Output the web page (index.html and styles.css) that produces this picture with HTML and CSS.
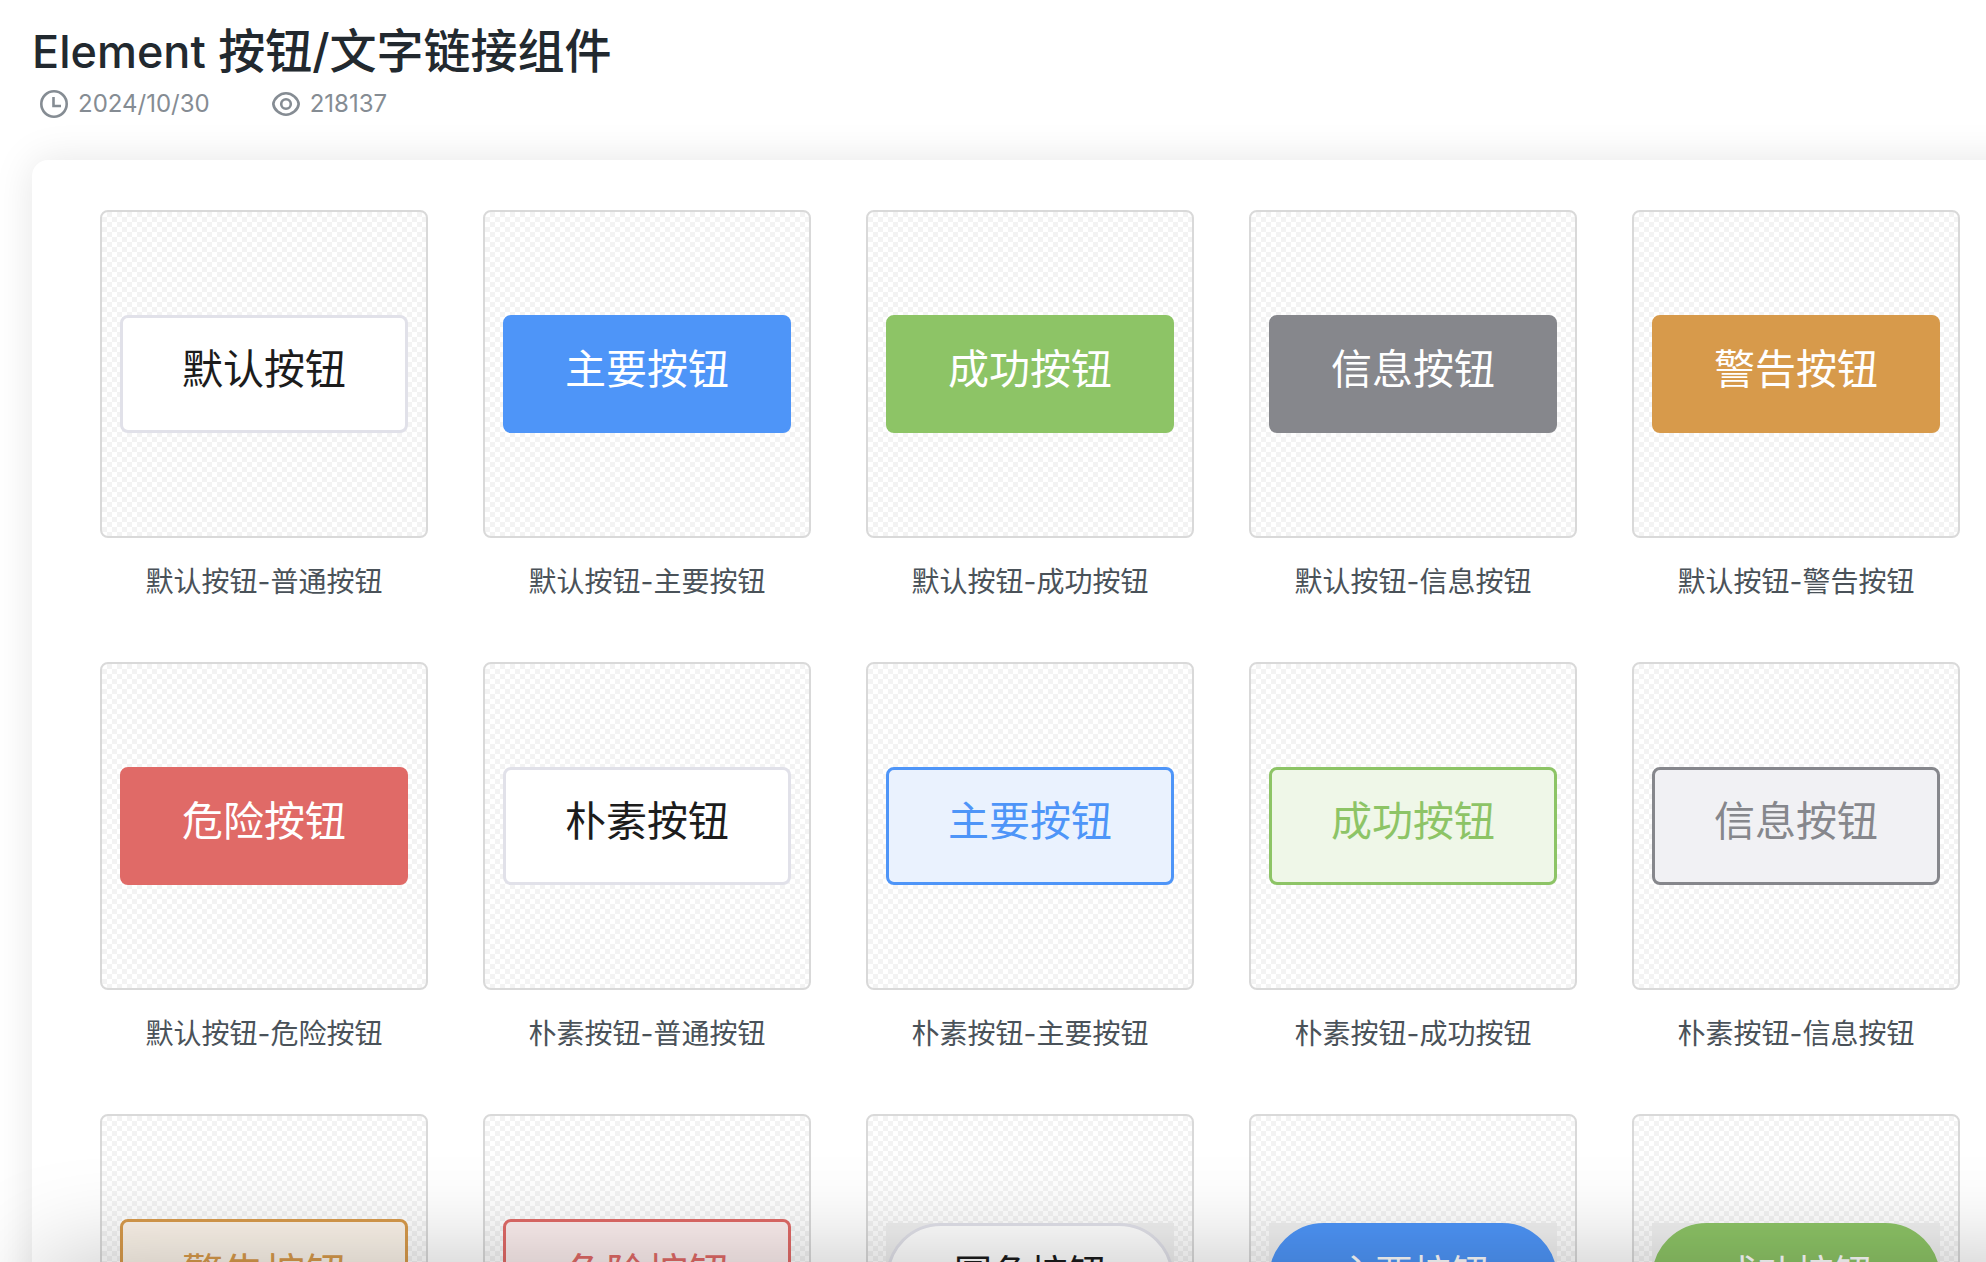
FILE: index.html
```html
<!DOCTYPE html>
<html lang="zh-CN">
<head>
<meta charset="utf-8">
<meta name="viewport" content="width=device-width, initial-scale=1">
<title>Element 按钮/文字链接组件</title>
<link rel="stylesheet" href="styles.css">
</head>
<body>
<header class="header">
  <h1 class="title"><span class="latin">Element</span> 按钮/文字链接组件</h1>
  <div class="meta">
    <span class="meta-item">
      <svg class="icon" viewBox="0 0 28 28" aria-hidden="true"><circle cx="14" cy="14" r="12.7"/><path d="M13.500 7v9H21"/></svg>
      <time datetime="2024-10-30">2024/10/30</time>
    </span>
    <span class="meta-item">
      <svg class="icon" viewBox="0 0 28 28" aria-hidden="true"><path d="M1.300 14C2 8 8 3.300 14 3.300S26 8 26.700 14C26 20 20 24.700 14 24.700S2 20 1.300 14Z"/><circle cx="14" cy="14" r="4.800"/></svg>
      <span>218137</span>
    </span>
  </div>
</header>
<main class="panel">
  <ul class="grid">
    <li class="item"><div class="preview"><button class="btn" type="button">默认按钮</button></div><p class="caption">默认按钮-普通按钮</p></li>
    <li class="item"><div class="preview"><button class="btn primary" type="button">主要按钮</button></div><p class="caption">默认按钮-主要按钮</p></li>
    <li class="item"><div class="preview"><button class="btn success" type="button">成功按钮</button></div><p class="caption">默认按钮-成功按钮</p></li>
    <li class="item"><div class="preview"><button class="btn info" type="button">信息按钮</button></div><p class="caption">默认按钮-信息按钮</p></li>
    <li class="item"><div class="preview"><button class="btn warning" type="button">警告按钮</button></div><p class="caption">默认按钮-警告按钮</p></li>
    <li class="item"><div class="preview"><button class="btn danger" type="button">危险按钮</button></div><p class="caption">默认按钮-危险按钮</p></li>
    <li class="item"><div class="preview"><button class="btn" type="button">朴素按钮</button></div><p class="caption">朴素按钮-普通按钮</p></li>
    <li class="item"><div class="preview"><button class="btn primary plain" type="button">主要按钮</button></div><p class="caption">朴素按钮-主要按钮</p></li>
    <li class="item"><div class="preview"><button class="btn success plain" type="button">成功按钮</button></div><p class="caption">朴素按钮-成功按钮</p></li>
    <li class="item"><div class="preview"><button class="btn info plain" type="button">信息按钮</button></div><p class="caption">朴素按钮-信息按钮</p></li>
    <li class="item"><div class="preview"><button class="btn warning plain" type="button">警告按钮</button></div></li>
    <li class="item"><div class="preview"><button class="btn danger plain" type="button">危险按钮</button></div></li>
    <li class="item"><div class="preview"><div class="backing"><button class="btn round" type="button">圆角按钮</button></div></div></li>
    <li class="item"><div class="preview"><div class="backing"><button class="btn round primary" type="button">主要按钮</button></div></div></li>
    <li class="item"><div class="preview"><div class="backing"><button class="btn round success" type="button">成功按钮</button></div></div></li>
  </ul>
</main>
<div class="bottom-shade"></div>
</body>
</html>
```
FILE: styles.css
```css
* {
  box-sizing: border-box;
}

html {
  overflow-x: hidden;
  scrollbar-width: none;
}

body {
  margin: 0;
  background: #fff;
  color: #22292f;
  font-family: Inter, "Noto Sans CJK SC", sans-serif;
}

.header {
  padding: 20px 32px 0;
}

.title {
  margin: 0;
  font-size: 47px;
  font-weight: 500;
  line-height: 62px;
}

.latin {
  font-size: 45px;
  line-height: 1;
}

.meta {
  display: flex;
  gap: 62px;
  padding: 6px 8px 0;
  color: #858c93;
  font-size: 24px;
  line-height: 32px;
}

.meta-item {
  display: flex;
  align-items: center;
  gap: 10px;
}

.icon {
  width: 28px;
  height: 28px;
  fill: none;
  stroke: currentColor;
  stroke-width: 2.600;
}

/* The panel bleeds off the right side of the window */
.panel {
  margin: 40px -60px 0 32px;
  padding: 50px 86px 50px 68px;
  border-radius: 16px;
  background: #fff;
  box-shadow: 0 0 40px rgba(0, 0, 0, 0.1);
}

.grid {
  display: grid;
  grid-template-columns: repeat(5, 1fr);
  gap: 60px 55px;
  margin: 0;
  padding: 0;
  list-style: none;
}

.preview {
  display: flex;
  align-items: center;
  aspect-ratio: 1;
  padding: 0 18px;
  border: 2px solid #d9d9d9;
  border-radius: 8px;
  background: repeating-conic-gradient(#f3f3f3 0 25%, #fff 0 50%) 0 0 / 10px 10px;
}

.caption {
  margin: 24px 0 0;
  color: #4a5259;
  font-size: 28px;
  line-height: 40px;
  text-align: center;
  white-space: nowrap;
}

.btn {
  --tone: #e1e1e9;
  width: 100%;
  height: 118px;
  padding: 0 0 10px;
  border: 3px solid var(--tone);
  border-radius: 8px;
  background: #fff;
  color: #1c1c1c;
  font-family: inherit;
  font-size: 41px;
  line-height: 60px;
}

.primary,
.success,
.info,
.warning,
.danger {
  background: var(--tone);
  color: #fff;
}

.primary {
  --tone: #4e95f8;
}

.success {
  --tone: #8dc466;
}

.info {
  --tone: #86878c;
}

.warning {
  --tone: #d79a4b;
}

.danger {
  --tone: #e06a67;
}

.plain {
  background: var(--tint);
  color: var(--tone);
}

.primary.plain {
  --tint: #eaf2fe;
}

.success.plain {
  --tint: #eff7e8;
}

.info.plain {
  --tint: #f1f1f4;
}

.warning.plain {
  --tint: #fbf3e9;
}

.danger.plain {
  --tint: #fceeee;
}

.backing {
  width: 100%;
  background: #f0f0f0;
}

.round {
  display: block;
  height: 110px;
  border-radius: 55px;
  font-size: 38px;
}

/* Shadow rising from below the window's edge */
.bottom-shade {
  position: fixed;
  top: 100%;
  right: -100px;
  left: 40px;
  height: 100px;
  box-shadow: 0 0 100px rgba(0, 0, 0, 0.25);
  pointer-events: none;
}
```
